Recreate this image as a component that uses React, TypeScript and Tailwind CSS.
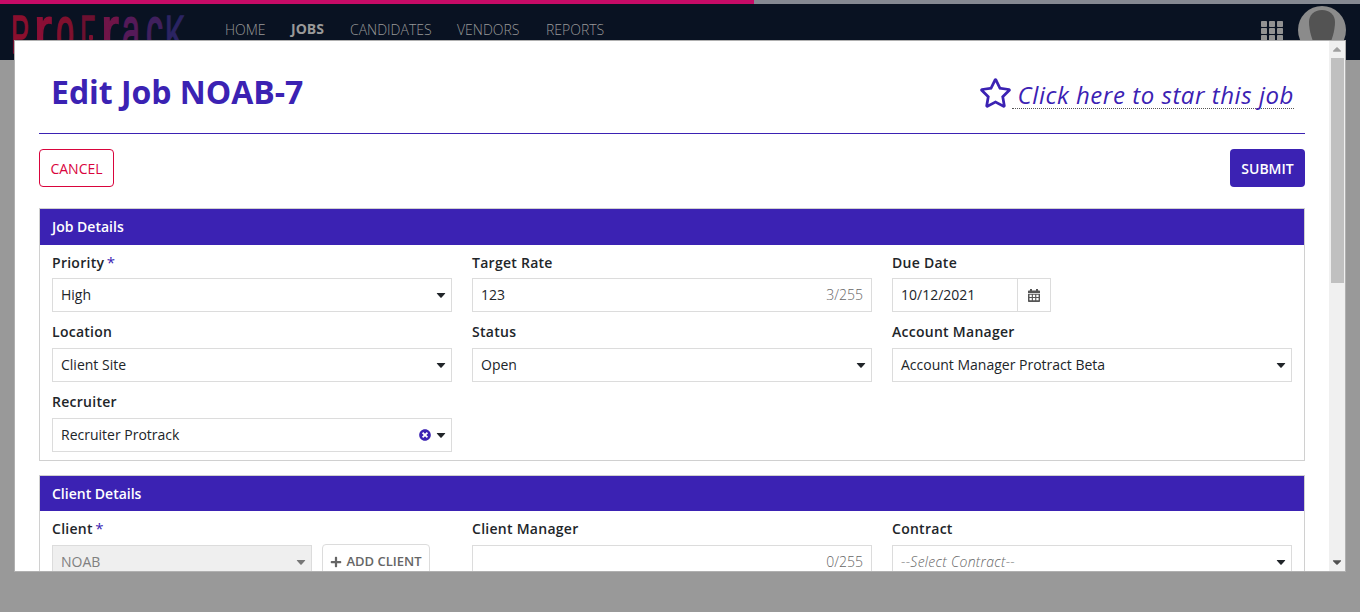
import React from "react";
import { FaRegStar, FaPlus, FaTimesCircle, FaCaretDown } from "react-icons/fa";

const letters = [
  { c: "P", x: 11, w: 18, color: "#8a0f2e" },
  { c: "r", x: 34, w: 18, color: "#8a0f35" },
  { c: "o", x: 56, w: 18, color: "#80102e" },
  { c: "Γ", x: 80, w: 15, color: "#6c1030" },
  { c: "r", x: 101, w: 18, color: "#701548" },
  { c: "a", x: 122, w: 18, color: "#551a58" },
  { c: "c", x: 146, w: 17, color: "#40205e" },
  { c: "K", x: 165, w: 20, color: "#2b2463" },
];

function Logo() {
  return (
    <svg width="200" height="56" viewBox="0 0 200 56" className="absolute left-0 top-1" aria-label="ProTrack">
      {letters.map((l, i) => (
        <text
          key={i}
          transform={`translate(${l.x} 49) scale(1 ${"roac".includes(l.c) ? 2.24 : 1.8})`}
          textLength={l.w}
          lengthAdjust="spacingAndGlyphs"
          fontFamily="Liberation Sans"
          fontSize="30"
          fill={l.color}
          stroke={l.color}
          strokeWidth=".8"
        >
          {l.c}
        </text>
      ))}
      <rect x="89" y="31" width="4" height="5" rx="1" fill="#7c1030" />
    </svg>
  );
}

function Label({ text, required }: { text: string; required?: boolean }) {
  return (
    <div className="h-[19px] text-sm font-semibold leading-[19px] tracking-[0.27px] text-[#212529]">
      {text}
      {required && <span className="ml-[2.5px] text-[15px] font-normal text-[#3b22b3]">*</span>}
    </div>
  );
}

function Caret({ className = "text-[#212529]" }: { className?: string }) {
  return (
    <svg width="10" height="5" viewBox="0 0 10 5" className={className}>
      <path d="M1.300 0h7.400q.9 0 .3.800L5.600 4.600q-.6.500-1.200 0L1 .800Q.4 0 1.300 0z" fill="currentColor" />
    </svg>
  );
}

function Box({ children, end, className = "bg-white text-[#212529]" }: { children?: React.ReactNode; end?: React.ReactNode; className?: string }) {
  return (
    <div className={`flex h-[34px] items-center justify-between border border-[#dcdcdc] pl-2 text-sm ${className}`}>
      <span>{children}</span>
      <span className="flex items-center">{end}</span>
    </div>
  );
}

function Select({ label, value, clear, required }: { label: string; value: string; clear?: boolean; required?: boolean }) {
  return (
    <div>
      <Label text={label} required={required} />
      <div className={required ? "mt-[6px]" : "mt-[7px]"}>
        <Box end={<span className="mr-[5px] flex items-center gap-[5px]">{clear && <FaTimesCircle className="size-3 text-[#3b22b3]" />}<Caret /></span>}>{value}</Box>
      </div>
    </div>
  );
}

function Count({ children }: { children: string }) {
  return <span className="mr-2 font-light text-[#666]">{children}</span>;
}

function CalendarIcon() {
  return (
    <svg width="12" height="13" viewBox="0 0 12 13" fill="#555">
      <path fillRule="evenodd" d="M2 0h2v1.5h4V0h2v1.5h1.2q.8 0 .8.8V4H0V2.300q0-.8.8-.8H2zM0 4.800h12v7.400q0 .8-.8.800H.8q-.8 0-.8-.8zm1.500 1V8h2.300V5.800zm3.400 0V8h2.300V5.800zm3.400 0V8h2.300V5.800zM1.500 9v2.200h2.300V9zm3.400 0v2.200h2.300V9zm3.400 0v2.200h2.300V9z" />
    </svg>
  );
}

function Panel({ title, children, className, headerClass }: { title: string; children: React.ReactNode; className: string; headerClass: string }) {
  return (
    <section className={`shrink-0 border border-[#d0d0d0] ${className}`}>
      <h2 className={`flex items-center bg-[#3b22b3] pl-3 text-sm font-semibold text-white ${headerClass}`}>{title}</h2>
      <div className="grid grid-cols-[400px_400px_400px] gap-x-5 gap-y-[10px] px-3 pt-2">{children}</div>
    </section>
  );
}

export default function App() {
  return (
    <div className="relative h-[612px] w-[1360px] overflow-hidden bg-[#999] font-['Open_Sans',sans-serif]">
      <div className="h-1 bg-[#858992]">
        <div className="h-1 w-[754px] bg-[#c60b67]" />
      </div>
      <header className="flex h-14 bg-[#091222]">
        <Logo />
        <nav className="flex gap-[25px] pl-[225px] pt-4 text-sm font-light leading-5 text-[#999]">
          <span className="w-[41px]">HOME</span>
          <span className="-mt-px w-[34px] font-bold">JOBS</span>
          <span className="w-[82px]">CANDIDATES</span>
          <span className="w-[64px]">VENDORS</span>
          <span>REPORTS</span>
        </nav>
        <svg width="90" height="54" viewBox="0 0 90 54" className="ml-auto mr-[10px]">
          <g fill="#929292">
            {[17, 24, 31].map((y) => [1, 9, 17].map((x) => <rect key={`${x}-${y}`} x={x} y={y} width="6" height="6" rx=".7" />))}
          </g>
          <circle cx="62" cy="26" r="24" fill="#8b8b8b" />
          <path d="M62 6c-8 0-13 5-13 12 0 8 3 20 8 26h10c5-6 8-18 8-26 0-7-5-12-13-12z" fill="#535353" />
        </svg>
      </header>

      <main className="absolute left-[14px] top-[40px] flex h-[532px] w-[1332px] overflow-hidden border border-[#b0b0b0] bg-white">
        <div className="flex h-full w-[1314px] flex-col overflow-hidden pl-6 pr-6">
          <div className="flex h-[93px] w-[1266px] shrink-0 items-start justify-between border-b border-[#3b22b3] pl-3 pr-[11px]">
            <h1 className="mt-[29px] text-[32px] font-bold leading-[44px] tracking-[-0.03px] text-[#3b22b3]">Edit Job NOAB-7</h1>
            <div className="mt-[37px] flex text-[#3b22b3]">
              <FaRegStar className="h-[30px] w-[33px]" />
              <span className="h-[31px] border-b border-dotted border-[#555] pl-[6px] text-2xl italic leading-[34px] tracking-[0.55px]">Click here to star this job</span>
            </div>
          </div>
          <div className="mt-[15px] flex w-[1266px] shrink-0 justify-between text-sm">
            <button className="h-[38px] w-[75px] rounded border border-[#d9043d] pt-[2px] text-[#d9043d]">CANCEL</button>
            <button className="h-[38px] w-[75px] rounded bg-[#3b22b3] pt-[2px] font-semibold text-white">SUBMIT</button>
          </div>
          <Panel title="Job Details" className="mt-[21px] h-[253px] w-[1266px]" headerClass="h-9">
            <Select label="Priority" value="High" required />
            <div>
              <Label text="Target Rate" />
              <div className="mt-[6px]"><Box end={<Count>3/255</Count>}>123</Box></div>
            </div>
            <div>
              <Label text="Due Date" />
              <div className="mt-[6px] w-[159px]">
                <Box end={<span className="flex h-8 w-[33px] items-center justify-center border-l border-[#dcdcdc]"><CalendarIcon /></span>}>10/12/2021</Box>
              </div>
            </div>
            <Select label="Location" value="Client Site" />
            <Select label="Status" value="Open" />
            <Select label="Account Manager" value="Account Manager Protract Beta" />
            <Select label="Recruiter" value="Recruiter Protrack" clear />
          </Panel>
          <Panel title="Client Details" className="mt-[14px] h-[200px] w-[1266px]" headerClass="h-[35px]">
            <div>
              <Label text="Client" required />
              <div className="mt-[6px] flex gap-[10px]">
                <div className="mt-px w-[260px]">
                  <Box className="bg-[#efefef] text-[#808080]" end={<Caret className="mr-[5px] text-[#777]" />}>NOAB</Box>
                </div>
                <button className="flex h-9 w-[108px] items-center justify-center gap-1 rounded border border-[#dcdcdc] text-[13px] font-semibold text-[#666]">
                  <FaPlus className="size-3" />ADD CLIENT
                </button>
              </div>
            </div>
            <div>
              <Label text="Client Manager" />
              <div className="mt-[7px]"><Box end={<Count>0/255</Count>} /></div>
            </div>
            <div>
              <Label text="Contract" />
              <div className="mt-[7px]"><Box end={<Caret className="mr-[5px] text-[#212529]" />}><span className="font-light italic tracking-[0.3px] text-[#666]">--Select Contract--</span></Box></div>
            </div>
          </Panel>
        </div>
        <div className="flex h-full w-[16px] flex-col items-center justify-between bg-[#f0f0f0]">
          <div className="flex w-full flex-col items-center">
            <FaCaretDown className="mt-[2px] h-[14px] w-3 rotate-180 text-[#a0a0a0]" />
            <div className="mt-px h-[225px] w-[13px] bg-[#c0c0c0]" />
          </div>
          <FaCaretDown className="mb-[2px] h-[14px] w-3 text-[#505050]" />
        </div>
      </main>
    </div>
  );
}
